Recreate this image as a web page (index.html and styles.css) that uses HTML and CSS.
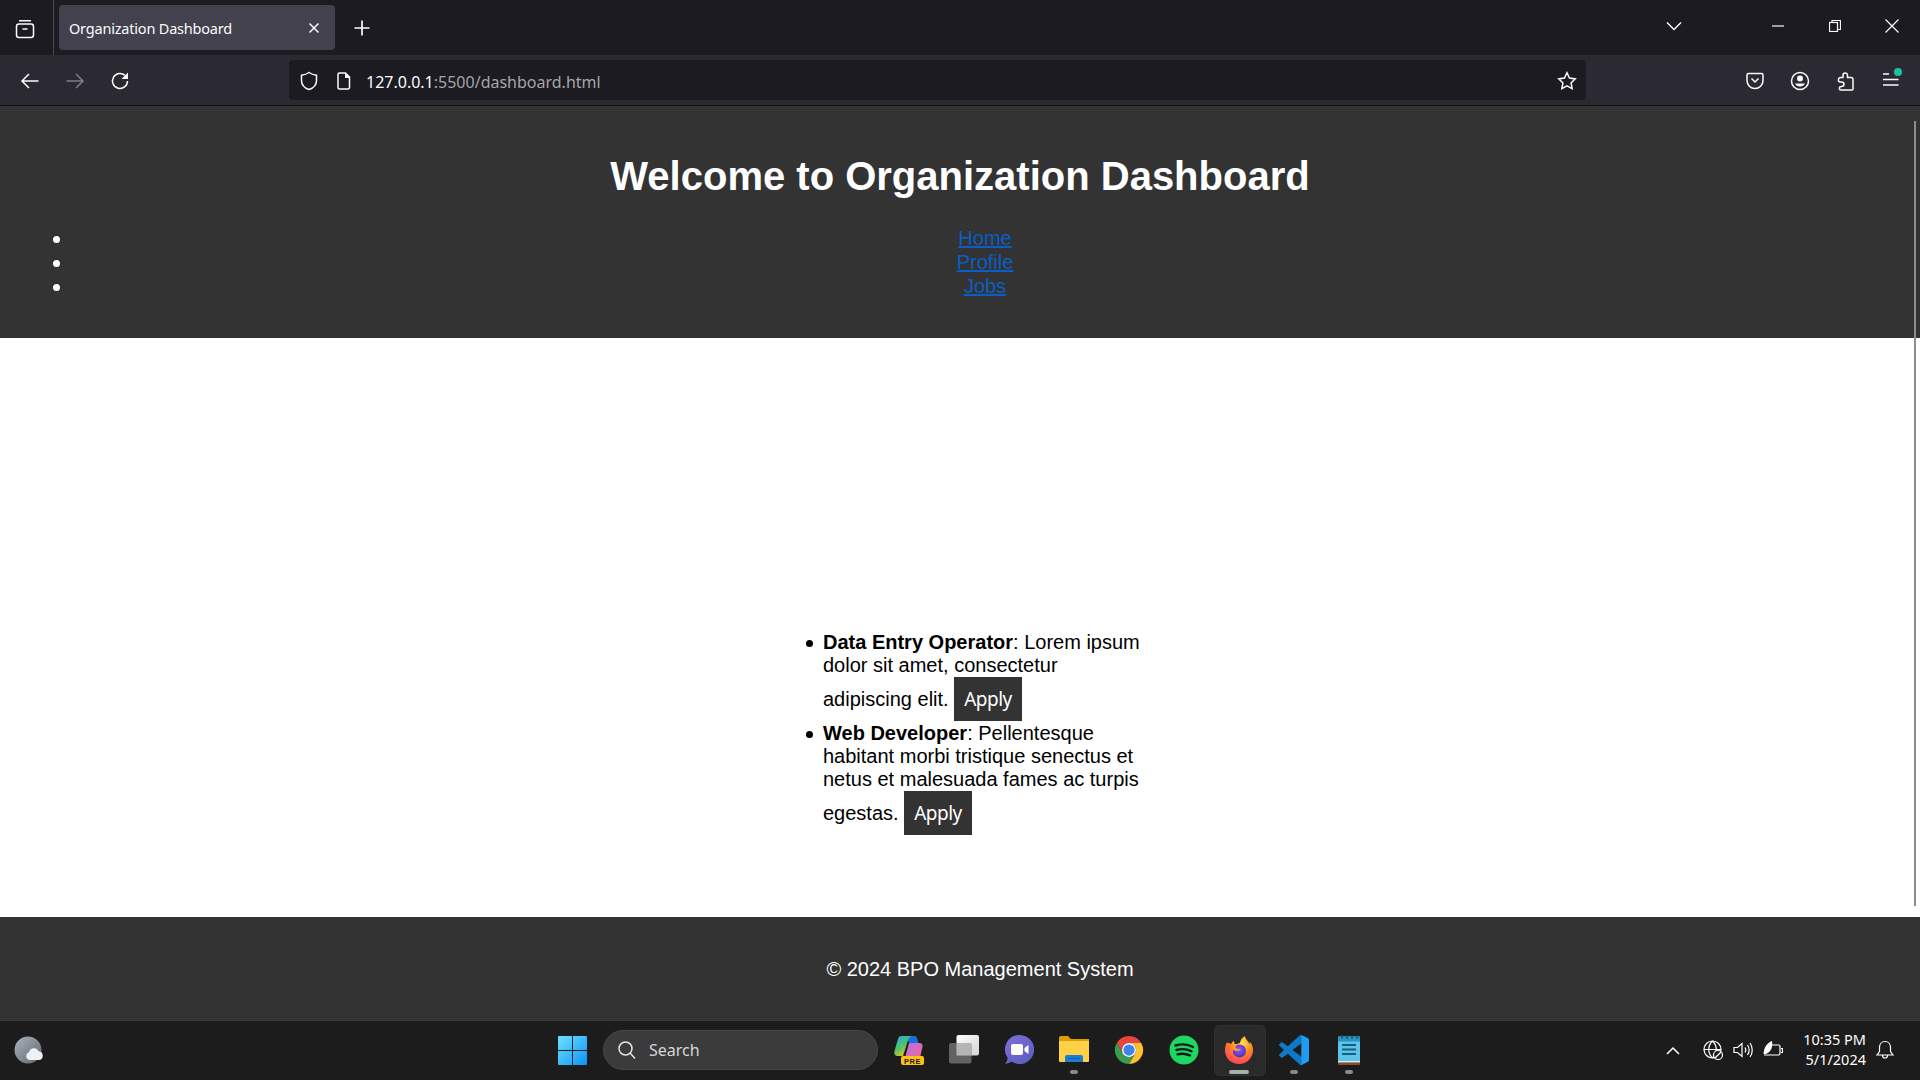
FILE: index.html
```html
<!DOCTYPE html>
<html lang="en">
<head>
<meta charset="utf-8">
<title>Organization Dashboard</title>
<link rel="stylesheet" href="styles.css">
</head>
<body>
<div class="tabbar">
  <div class="tabs-btn"><svg class="i20" viewBox="0 0 20 20"><rect x="1.5" y="5" width="17" height="13.5" rx="2.5"/><path d="M4 1.800h12M7.500 10h5"/></svg></div>
  <div class="tab"><span class="tab-title">Organization Dashboard</span><svg class="i12" viewBox="0 0 12 12"><path d="M1.500 1.500l9 9M10.500 1.500l-9 9"/></svg></div>
  <div class="newtab"><svg class="i16" viewBox="0 0 16 16"><path d="M8 .5v15M.5 8h15"/></svg></div>
  <div class="tabs-list"><svg class="i16" viewBox="0 0 16 10"><path d="M1 1.500l7 7 7-7"/></svg></div>
  <div class="winbtns">
    <div class="winbtn"><svg class="i12 thin" viewBox="0 0 12 12"><path d="M0 6h12"/></svg></div>
    <div class="winbtn"><svg class="i12 thin" viewBox="0 0 12 12"><rect x=".5" y="2.500" width="8" height="9"/><path d="M3 2.500V.5h8.500v9H8.500"/></svg></div>
    <div class="winbtn"><svg class="i14 thin" viewBox="0 0 14 14"><path d="M.5.500l13 13M13.500.500l-13 13"/></svg></div>
  </div>
</div>
<div class="toolbar">
  <div class="navbtns">
    <div class="tool"><svg class="i20" viewBox="0 0 20 20"><path d="M18.500 10H2M9 3l-7 7 7 7"/></svg></div>
    <div class="tool dim"><svg class="i20" viewBox="0 0 20 20"><path d="M1.500 10H18M11 3l7 7-7 7"/></svg></div>
    <div class="tool"><svg class="i20" viewBox="0 0 20 20"><path d="M17.500 10a7.500 7.500 0 1 1-2.400-5.500"/><path class="solid" d="M18 1.500v6.500h-6.500z"/></svg></div>
  </div>
  <div class="urlbar">
    <svg class="i20" viewBox="0 0 20 20"><path d="M10 1.500c2.500 1.800 5 2.400 7.500 2.700v5.300c0 4.300-3 7.500-7.500 9-4.500-1.500-7.500-4.700-7.500-9V4.200C5 3.900 7.500 3.300 10 1.500z"/></svg>
    <svg class="i20 page-ic" viewBox="0 0 20 20"><path d="M5.500 2h6l4 4v10.500a1.500 1.500 0 0 1-1.500 1.500H5.500A1.500 1.500 0 0 1 4 16.500v-13A1.500 1.500 0 0 1 5.500 2z"/><path class="solid" d="M11 2l5 5h-5z"/></svg>
    <span class="url"><span class="url-host">127.0.0.1</span>:5500/dashboard.html</span>
    <svg class="i20 star" viewBox="0 0 20 20"><path d="M10 1.800l2.500 5.300 5.700.8-4.100 4 1 5.800-5.100-2.800-5.100 2.800 1-5.800-4.100-4 5.700-.8z"/></svg>
  </div>
  <div class="tools">
    <div class="tool"><svg class="i20" viewBox="0 0 20 20"><path d="M3.500 2.500h13a1.500 1.500 0 0 1 1.500 1.500v5.500a8 8 0 0 1-16 0V4a1.500 1.500 0 0 1 1.500-1.500z"/><path d="M6.500 7.500L10 11l3.500-3.500"/></svg></div>
    <div class="tool"><svg class="i20" viewBox="0 0 20 20"><circle cx="10" cy="10" r="8.500"/><circle class="solid" cx="10" cy="7.500" r="3"/><path class="solid" d="M5 12.500h10a5.500 5 0 0 1-10 0z"/></svg></div>
    <div class="tool"><svg class="i20" viewBox="0 0 20 20"><path d="M9 2a2.200 2.200 0 0 1 2.500 2.200V6.500h3.500a2 2 0 0 1 2 2V18a1 1 0 0 1-1 1H4.500a1 1 0 0 1-1-1v-1.500c0-1 .8-1 2-1 1.800 0 2.500-1 2.500-2.200S7.300 11 5.500 11c-1.200 0-3 0-3-1V8.500a2 2 0 0 1 2-2H7V4.200A2.200 2.200 0 0 1 9 2z"/></svg></div>
    <div class="tool menu"><svg class="i20" viewBox="0 0 20 20"><path d="M2 3h6M2 8.500h15.500M2 14h15.500"/></svg><span class="dot"></span></div>
  </div>
</div>

<div class="page">
  <header class="site-header">
    <h1>Welcome to Organization Dashboard</h1>
    <ul class="site-nav">
      <li><a href="#">Home</a></li>
      <li><a href="#">Profile</a></li>
      <li><a href="#">Jobs</a></li>
    </ul>
  </header>
  <main class="site-main">
    <div class="jobs">
      <ul class="job-list">
        <li><strong>Data Entry Operator</strong>: Lorem ipsum dolor sit amet, consectetur adipiscing elit. <button class="apply">Apply</button></li>
        <li><strong>Web Developer</strong>: Pellentesque habitant morbi tristique senectus et netus et malesuada fames ac turpis egestas. <button class="apply">Apply</button></li>
      </ul>
    </div>
  </main>
  <footer class="site-footer"><p>© 2024 BPO Management System</p></footer>
  <div class="scrollbar"></div>
</div>

<div class="taskbar">
  <div class="weather">
    <svg class="i30" viewBox="0 0 30 30"><defs><linearGradient id="moon" x1="0" y1="0" x2="1" y2="1"><stop offset="0" stop-color="#aab2bb"/><stop offset="1" stop-color="#5f6771"/></linearGradient></defs><circle cx="15" cy="15" r="13.500" fill="url(#moon)"/><path fill="#eef1f4" d="M17 25a4 4 0 0 1-1-7.800 5 5 0 0 1 9.500-1 4.500 4.500 0 0 1 1 8.800z"/></svg>
  </div>
  <div class="tb-center">
    <svg class="winlogo" viewBox="0 0 30 30"><defs><linearGradient id="win" x1="0" y1="0" x2="1" y2="1"><stop offset="0" stop-color="#6fe0ff"/><stop offset="1" stop-color="#0a94f5"/></linearGradient></defs><path fill="url(#win)" d="M0 1a1 1 0 0 1 1-1h13.500v14.500H0zM15.500 0H29a1 1 0 0 1 1 1v13.500H15.500zM0 15.500h14.500V30H1a1 1 0 0 1-1-1zM15.500 15.500H30V29a1 1 0 0 1-1 1H15.500z"/></svg>
    <div class="search"><svg class="i20 search-ic" viewBox="0 0 20 20"><circle cx="8.500" cy="8.500" r="6.500"/><path d="M13.300 13.300L18 18.500"/></svg><span>Search</span></div>
    <div class="apps">
      <div class="app"><svg class="i30" viewBox="0 0 30 30"><defs><linearGradient id="cp1" x1="0" y1="0" x2=".6" y2="1"><stop offset="0" stop-color="#25a7f0"/><stop offset=".55" stop-color="#4fc36a"/><stop offset="1" stop-color="#f2c21a"/></linearGradient><linearGradient id="cp2" x1="0" y1="0" x2="1" y2="1"><stop offset="0" stop-color="#b96be6"/><stop offset="1" stop-color="#f06a96"/></linearGradient></defs><path fill="#1472e0" d="M9 1h11a3 3 0 0 1 3 2l1.500 5h-9z"/><path fill="url(#cp2)" d="M15 8h10c2.500 0 4 1.200 3.500 3.500L26 23H11z"/><path fill="url(#cp1)" d="M7.500 1C5.500 1 4.500 2 4 4L.5 16c-.7 2.500.5 5 3 5H9l4.500-14c.7-2.500 2-6 5-6z"/><rect x="7" y="21" width="23" height="9" rx="2" fill="#fdc213"/><text class="pre" x="18.500" y="28.500">PRE</text></svg></div>
      <div class="app"><svg class="i30" viewBox="0 0 30 30"><defs><linearGradient id="tv" x1="0" y1="0" x2="1" y2="1"><stop offset="0" stop-color="#fff"/><stop offset="1" stop-color="#d4d4d4"/></linearGradient></defs><rect x="7.500" y="0" width="22.500" height="20.500" rx="2" fill="url(#tv)"/><rect x="0" y="8" width="22.500" height="20.500" rx="2" fill="#6a6a6a" fill-opacity=".9"/><rect x="7.500" y="8" width="15" height="12.500" fill="#b5b5b5"/></svg></div>
      <div class="app"><svg class="i30" viewBox="0 0 30 30"><defs><linearGradient id="meet" x1="0" y1="0" x2="1" y2="1"><stop offset="0" stop-color="#7d6fd6"/><stop offset="1" stop-color="#5a5cc0"/></linearGradient></defs><path fill="url(#meet)" d="M15.500 0a14.500 14.500 0 1 1-8 26.500c-2 1.500-4 2-6.500 2.300 1.500-1.500 2.500-3.500 2.600-6A14.500 14.500 0 0 1 15.500 0z"/><rect x="7" y="9" width="12" height="11" rx="2" fill="#fff"/><path fill="#fff" d="M20.500 13l4-3v9l-4-3z"/></svg></div>
      <div class="app"><svg class="i30" viewBox="0 0 30 30"><path fill="#d9a100" d="M0 3a2 2 0 0 1 2-2h7l3 3h18v6H0z"/><path fill="#ffd149" d="M0 6h30v20a1 1 0 0 1-1 1H1a1 1 0 0 1-1-1z"/><path fill="#1a7fd0" d="M6 27v-5a2 2 0 0 1 2-2h14a2 2 0 0 1 2 2v5z"/><path fill="#0f5da6" d="M9 23h12v1H9z"/></svg><span class="ind"></span></div>
      <div class="app"><svg class="i30" viewBox="0 0 32 32"><path fill="#e8453c" d="M16 1A15 15 0 0 1 29 8.500H16A7.500 7.500 0 0 0 9.500 19.750L3 8.500A15 15 0 0 1 16 1z"/><path fill="#fbc02d" d="M29 8.500A15 15 0 0 1 16 31l6.500-11.250A7.500 7.500 0 0 0 16 8.500z"/><path fill="#3a9c4f" d="M3 8.500A15 15 0 0 0 16 31l6.500-11.250a7.500 7.500 0 0 1-13 0z"/><circle cx="16" cy="16" r="7.500" fill="#fff"/><circle cx="16" cy="16" r="6" fill="#3f84ec"/></svg></div>
      <div class="app"><svg class="i30" viewBox="0 0 30 30"><circle cx="15" cy="15" r="14.500" fill="#1ed760"/><path class="sp" d="M6.500 10.500c6-1.800 12.500-1.200 17.500 1.500M7.500 15c5-1.400 10.500-1 15 1.300M8.500 19.300c4.200-1 8.500-.7 12.500 1.100"/></svg></div>
      <div class="app active"><svg class="i30" viewBox="0 0 32 32"><defs><radialGradient id="ffo" cx=".6" cy=".25" r=".95"><stop offset="0" stop-color="#ffe14d"/><stop offset=".4" stop-color="#ff8a1f"/><stop offset=".8" stop-color="#ff3f5e"/><stop offset="1" stop-color="#e3197e"/></radialGradient><radialGradient id="ffp" cx=".45" cy=".4" r=".7"><stop offset="0" stop-color="#9059ff"/><stop offset="1" stop-color="#4a2bb0"/></radialGradient></defs><path fill="url(#ffo)" d="M30 11c-.7-1.700-2-3.500-3-4.200.5 1.500.8 3 .7 3.400C26.500 7.200 24 6 22 1c-3.500 2-4.800 5.700-4.900 7.500-1.500.1-2.800.6-3.800 1.400-.6-.4-1.200-.2-1.700-.3-.5-.7-.9-2-1-3.400-2 1-2.800 3-3.100 3.700C4.800 7.500 2.600 8.500 2.600 8.500 2 10 1 13 1 16.500 1 24.700 7.700 31 16 31s15-6.700 15-15c0-1.800-.4-3.500-1-5z"/><circle cx="16.500" cy="17" r="7" fill="url(#ffp)"/><path fill="#ff9a2e" d="M9 14c1-2.500 3.500-4 6.500-3.800-3 .7-3.500 2.300-3 3.500 1 1.500 3.500 1.800 5.500 1-.5 1.500-2.500 2.800-5 2.300-2-.4-3.500-1.500-4.500-3z"/></svg></div>
      <div class="app"><svg class="i30" viewBox="0 0 100 100"><path fill="#0f78c8" d="M96.460 10.800 75.860.87a6.230 6.230 0 0 0-7.100 1.200L29.600 37.800 12.480 24.800a4.160 4.160 0 0 0-5.320.24L1.660 30a4.160 4.160 0 0 0 0 6.170L16.500 50 1.660 63.800a4.160 4.160 0 0 0 0 6.170l5.500 5a4.160 4.160 0 0 0 5.320.24L29.600 62.200l39.160 35.730a6.220 6.220 0 0 0 7.100 1.200l20.600-9.920A6.240 6.240 0 0 0 100 83.600V16.400a6.240 6.240 0 0 0-3.540-5.600ZM75 72.700 45.300 50 75 27.300Z"/><path fill="#1f9cf0" d="M75 .3a6.300 6.300 0 0 1 .86.570l20.600 9.930A6.240 6.240 0 0 1 100 16.400v67.200a6.240 6.240 0 0 1-3.540 5.610l-20.600 9.920A6.200 6.200 0 0 1 71 99.800Q73 99 75 97Z"/></svg><span class="ind"></span></div>
      <div class="app"><svg class="notepad" viewBox="0 0 22 30"><rect y="1.500" width="22" height="27" rx="1" fill="#5cc4e8"/><rect y="1.500" width="22" height="5" fill="#2a93c1"/><path fill="#12607f" d="M3 .5h2v3H3zM8 .5h2v3H8zM13 .5h2v3h-2zM18 .5h2v3h-2zM4 9h14v2H4zM4 13.500h14v2H4zM4 18h14v2H4z"/><rect y="26" width="22" height="1.500" fill="#e9e9e9"/><rect y="27.500" width="22" height="2.500" rx="1" fill="#8f4a22"/></svg><span class="ind"></span></div>
    </div>
  </div>
  <div class="tray">
    <div class="tray-chev"><svg class="i14 tray-ic" viewBox="0 0 14 14"><path d="M1 10l6-6 6 6"/></svg></div>
    <div class="tray-slot"><svg class="i20 tray-ic thin" viewBox="0 0 20 20"><circle cx="9.500" cy="9.500" r="8.500"/><path d="M1 9.500h17M9.500 1c-5 5-5 12 0 17M9.500 1c5 5 5 12 0 17"/><circle class="tray-mask" cx="15" cy="15" r="4.500"/><path d="M12 18l6-6"/></svg></div>
    <div class="tray-slot"><svg class="i20 tray-ic thin" viewBox="0 0 20 20"><path d="M1 7.500h3.500L9 3.500v13l-4.500-4H1zM12 7.500c1 1.500 1 3.500 0 5M14.500 5c2 3 2 7 0 10M17 3c3 4 3 10 0 14"/></svg></div>
    <div class="tray-slot"><svg class="i20 tray-ic thin" viewBox="0 0 20 20"><path d="M8 5h7.500A1.500 1.500 0 0 1 17 6.500v7a1.500 1.500 0 0 1-1.500 1.500H1M18 8.500h1.500v4H18"/><path class="tray-solid" d="M.5 14C1 7 4 3 9 1c1 6-1 11-6 13z"/></svg></div>
    <div class="clock"><div>10:35 PM</div><div>5/1/2024</div></div>
    <div class="bell"><svg class="i20 tray-ic thin" viewBox="0 0 20 20"><path d="M10 1.500c3.500 0 5.500 2.800 5.500 6v4l2.500 3.500H2l2.500-3.500v-4c0-3.200 2-6 5.500-6zM7.500 15.500a2.500 2.500 0 0 0 5 0"/></svg></div>
  </div>
</div>
</body>
</html>
```

FILE: styles.css
```css
* { box-sizing: border-box; }
html, body { margin: 0; height: 100%; }
body {
  width: 1920px;
  height: 1080px;
  overflow: hidden;
  display: flex;
  flex-direction: column;
  font-family: "Liberation Sans", Arial, sans-serif;
  font-size: 20px;
  background: #fff;
}
svg { display: block; fill: none; stroke: #fbfbfe; stroke-width: 1.5; flex: none; }
svg .solid { fill: #fbfbfe; stroke: none; }
.thin { stroke-width: 1.2; }
.i12 { width: 12px; height: 12px; }
.i14 { width: 14px; height: 14px; }
.i16 { width: 16px; height: 16px; }
.i20 { width: 20px; height: 20px; }
.i30 { width: 30px; height: 30px; stroke: none; }

/* Browser chrome */
.tabbar { height: 55px; background: #1c1b22; display: flex; flex: none; }
.tabs-btn { width: 54px; border-right: 1px solid #4a4a52; display: flex; align-items: center; padding-left: 15px; padding-top: 2px; }
.tab {
  width: 276px; height: 45px; margin: 5px 0 0 5px;
  background: #42414d; border-radius: 4px;
  display: flex; align-items: center; justify-content: space-between;
  padding: 0 15px 0 10px; color: #fbfbfe;
}
.tab-title { font: 14.500px "Noto Sans", sans-serif; letter-spacing: -.2px; }
.newtab { width: 52px; display: flex; align-items: center; justify-content: center; padding: 1px 0 0 1px; }
.newtab svg { stroke-width: 1.7; }
.tabs-list { margin-left: auto; width: 40px; margin-right: 56px; display: flex; align-items: center; justify-content: center; }
.tabs-list svg { height: 10px; margin-top: -3px; }
.winbtns { display: flex; }
.winbtn { width: 56.670px; display: flex; align-items: center; justify-content: center; margin-top: -3px; }

.toolbar { height: 51px; background: #2b2a33; border-bottom: 1px solid #0c0c0d; display: flex; align-items: center; flex: none; padding-left: 7.500px; }
.navbtns, .tools { display: flex; }
.tool { width: 45px; height: 40px; display: flex; align-items: center; justify-content: center; position: relative; }
.tool svg, .urlbar svg { margin-top: 1px; }
.dim svg { opacity: .4; }
.urlbar {
  width: 1297px; height: 40px; margin-left: 146.500px; background: #1c1b22; border-radius: 4px;
  display: flex; align-items: center; padding: 0 9px 0 10px; color: #a5a5aa;
}
.page-ic { margin-left: 15px; }
.url { margin: 3px 0 0 12px; font: 16px "Noto Sans", sans-serif; }
.url-host { color: #fbfbfe; }
.star { margin-left: auto; }
.tools { margin-left: 146.500px; }
.tools .tool { width: 45.300px; }
.dot { position: absolute; top: 8px; right: 12px; width: 8px; height: 8px; border-radius: 50%; background: #1cc2a0; }

/* Page */
.page { flex: 1; display: flex; flex-direction: column; position: relative; min-height: 0; }
.site-header { background: #333; color: #fff; padding: 20px; height: 232px; }
.site-header h1 { text-align: center; font-size: 40px; margin: 27.800px 0 27.800px; }
.site-nav { margin: 0; padding: 0 0 0 50px; list-style: none; }
.site-nav li { text-align: center; height: 24px; position: relative; }
.site-nav li::before, .job-list li::before {
  content: ""; position: absolute; left: -17.500px; top: 9px;
  width: 7px; height: 7px; border-radius: 50%; background: currentColor;
}
.site-nav a { color: #0a5ec4; }
.site-main { height: 579px; padding: 293px 0 0; display: flex; justify-content: center; }
.jobs { width: 400px; padding: 0 20px; }
.job-list { margin: 0; padding: 0 0 0 43px; color: #000; list-style: none; }
.job-list li { position: relative; }
.apply { font: 19px "Noto Sans", sans-serif; letter-spacing: -.5px; color: #fff; background: #333; border: 0; padding: 0 10px; height: 44px; margin: 0 0 1px; }
.site-footer { background: #333; color: #fff; height: 103px; padding: 20px 0 20px 40px; text-align: center; flex: 1; }
.site-footer p { margin: 20.500px 0; }
.scrollbar { position: absolute; right: 4px; top: 15px; bottom: 114px; width: 2px; background: #8c8c8c; }

/* Windows taskbar */
.taskbar { height: 60px; background: #1c1c1c; border-top: 1px solid #3a3a3a; display: flex; flex: none; align-items: center; color: #fff; }
.weather { width: 56px; display: flex; justify-content: center; margin-top: -1px; }
.tb-center { display: flex; align-items: center; margin-left: 502px; }
.winlogo { width: 29px; height: 29px; stroke: none; margin-top: -1px; }
.search {
  width: 275px; height: 40px; margin: -1px 0 0 16px; background: #3b3b3b; border: 1px solid #474747; border-radius: 20px;
  display: flex; align-items: center; padding-left: 13px; gap: 12px;
  font: 16px "Noto Sans", sans-serif; color: #d6d6d6;
}
.search-ic { stroke: #e4e4e4; }
.apps { display: flex; margin-left: 3.500px; }
.app { width: 55px; height: 59px; display: flex; align-items: center; justify-content: center; position: relative; }
.app > svg { position: relative; margin-top: -1px; }
.app.active::before { content: ""; position: absolute; left: 2.500px; top: 4px; width: 50px; height: 49px; background: #2a2a2a; border: 1px solid #313131; border-radius: 5px; }
.ind { position: absolute; left: 23.500px; top: 49px; width: 8px; height: 4px; border-radius: 2px; background: #8a8a8a; }
.app.active::after { content: ""; position: absolute; left: 17.500px; top: 49px; width: 20px; height: 4px; border-radius: 2px; background: #a5b3a8; }
.pre { font: 700 7.500px "Liberation Sans", sans-serif; fill: #1c1c1c; stroke: none; text-anchor: middle; letter-spacing: .6px; }
.sp { stroke: #14181a; stroke-width: 2.400; stroke-linecap: round; fill: none; }
.notepad { width: 22px; height: 30px; stroke: none; }

.tray { margin-left: auto; display: flex; align-items: center; padding-right: 16px; }
.tray-chev { width: 46px; margin-right: 2px; display: flex; justify-content: center; }
.tray-slot { width: 30px; display: flex; justify-content: center; margin-top: -1px; }
.tray-ic { stroke: #fff; }
.tray-chev svg { stroke-width: 1.500; }
.tray-mask { fill: #1c1c1c; }
.tray-solid { fill: #fff; stroke: none; }
.clock { width: 78px; text-align: right; font: 14.500px/20px "Noto Sans", sans-serif; margin-bottom: 4px; }
.bell { width: 38px; display: flex; justify-content: center; margin-top: -1px; }
```
